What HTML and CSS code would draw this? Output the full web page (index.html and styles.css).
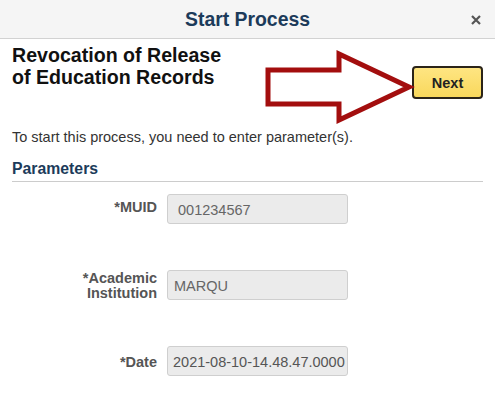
FILE: index.html
```html
<!DOCTYPE html>
<html lang="en">
<head>
<meta charset="utf-8">
<title>Start Process</title>
<link rel="stylesheet" href="styles.css">
</head>
<body>
<div class="dialog">
  <header class="dialog-header">
    <span></span>
    <h2 class="dialog-title">Start Process</h2>
    <button class="close-btn" aria-label="Close">
      <svg width="10" height="10" viewBox="0 0 10 10" aria-hidden="true"><path d="M1 1 L9 9 M9 1 L1 9" stroke="#555" stroke-width="2.2" fill="none"/></svg>
    </button>
  </header>
  <main class="dialog-body">
    <div class="top-row">
      <h1 class="process-title">Revocation of Release<br>of Education Records</h1>
      <button class="next-btn">Next</button>
    </div>
    <p class="intro">To start this process, you need to enter parameter(s).</p>
    <h3 class="section-title">Parameters</h3>
    <div class="form">
      <div class="form-row">
        <label class="form-label">*MUID</label>
        <div class="form-field field-muid">001234567</div>
      </div>
      <div class="form-row">
        <label class="form-label label-two">*Academic<br>Institution</label>
        <div class="form-field">MARQU</div>
      </div>
      <div class="form-row">
        <label class="form-label label-date">*Date</label>
        <div class="form-field field-date">2021-08-10-14.48.47.0000</div>
      </div>
    </div>
  </main>
  <svg class="annotation" width="495" height="410" viewBox="0 0 495 410" aria-hidden="true">
    <polygon points="268,70 339,70 339,54 409,87 339,120 339,104 268,104" fill="none" stroke="#a30e0e" stroke-width="5" stroke-linejoin="miter"/>
  </svg>
</div>
</body>
</html>
```
FILE: styles.css
```css
* { box-sizing: border-box; }
html, body { margin: 0; padding: 0; background: #fff; }
body {
  font-family: "Liberation Sans", Arial, sans-serif;
  color: #333;
  width: 495px;
  height: 410px;
  overflow: hidden;
}
.dialog { position: relative; width: 495px; height: 410px; }
.dialog-header {
  height: 39px;
  background: #f5f5f5;
  border-bottom: 1px solid #d2d2d2;
  display: grid;
  grid-template-columns: 1fr auto 1fr;
  align-items: center;
}
.dialog-title {
  margin: 0;
  font-size: 19.4px;
  font-weight: bold;
  color: #1c3b5a;
  line-height: 36px;
}
.close-btn {
  justify-self: end;
  margin-right: 14px;
  margin-top: 1px;
  border: 0;
  background: transparent;
  padding: 0;
  width: 10px;
  height: 10px;
  display: flex;
}
.dialog-body { padding: 0 12px; }
.top-row {
  display: flex;
  justify-content: space-between;
  align-items: flex-start;
}
.process-title {
  margin: 5px 0 0 0;
  font-size: 19.6px;
  line-height: 22px;
  font-weight: bold;
  color: #111;
}
.next-btn {
  margin-top: 27px;
  width: 71px;
  height: 33px;
  border: 2px solid #2b2418;
  border-radius: 4px;
  background: linear-gradient(#fee582, #f9d85c);
  font-family: "Liberation Sans", Arial, sans-serif;
  font-size: 14.5px;
  font-weight: bold;
  color: #222;
  padding: 0;
}
.intro {
  margin: 30px 0 0 0;
  font-size: 14.5px;
  line-height: 17px;
  color: #333;
}
.section-title {
  margin: 14px 0 0 0;
  font-size: 15.8px;
  line-height: 18px;
  font-weight: bold;
  color: #1c3b5a;
  padding-bottom: 3px;
  border-bottom: 1px solid #cccccc;
}
.form {
  margin-top: 12px;
  display: flex;
  flex-direction: column;
  gap: 45px;
}
.form-row {
  display: flex;
  align-items: center;
  gap: 10px;
}
.form-label {
  width: 145px;
  text-align: right;
  font-size: 14.5px;
  line-height: 15px;
  font-weight: bold;
  color: #555;
  margin-top: -3px;
}
.label-two { margin-top: 2px; }
.label-date { margin-top: 3px; }
.form-field {
  width: 181px;
  height: 30px;
  background: #ebebeb;
  border: 1px solid #cfcfcf;
  border-radius: 3px;
  padding: 0 0 0 6px;
  font-size: 14.5px;
  line-height: 30px;
  color: #666;
  white-space: nowrap;
  overflow: hidden;
}
.field-muid { padding-left: 10px; line-height: 31px; }
.field-date { padding-left: 5px; color: #555; }
.annotation {
  position: absolute;
  left: 0;
  top: 0;
  pointer-events: none;
}
```
